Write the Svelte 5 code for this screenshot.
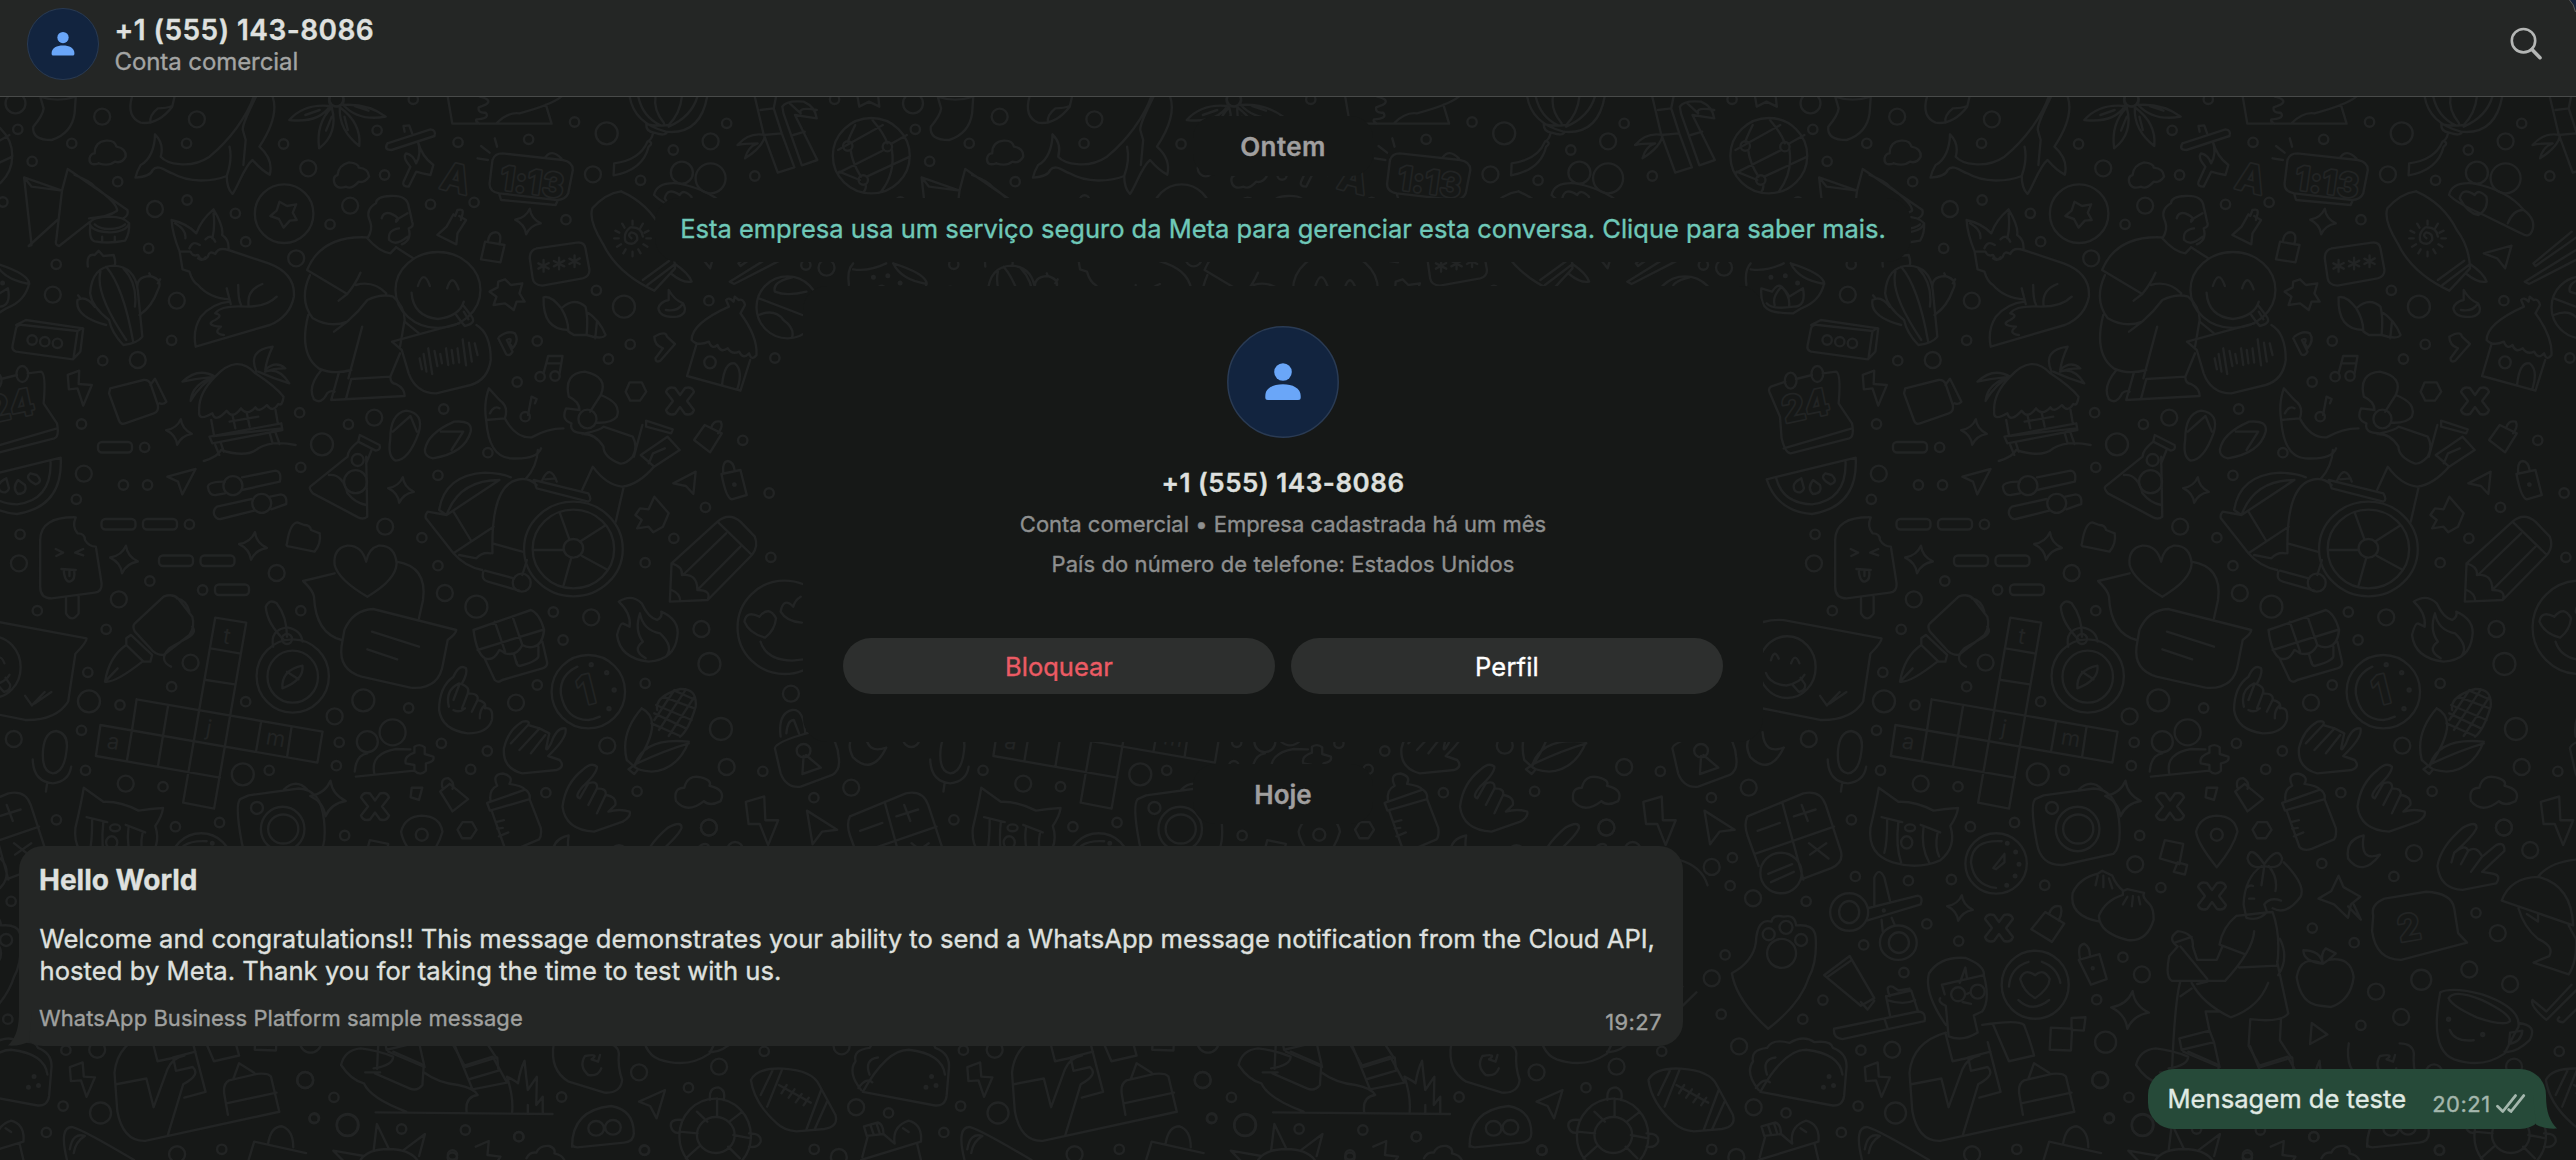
<script>
  const TILE = 897.5;

  // Each sheet holds line drawings in its own grid; m maps the grid onto the wallpaper.
  const sheets = [
    {
      m: [0.57398, 0.33333, 0, 0],
      paths: [
        // sock, mitten, whale
        'M70 290Q100 308 132 290L130 340Q125 400 90 420Q55 420 58 380Q75 345 76 325L70 290',
        'M230 290Q220 350 245 368Q275 375 300 320L304 290M262 368Q260 345 275 325Q290 325 300 318',
        'M442 290C430 350 400 420 365 470C330 510 290 490 280 470C285 440 280 420 270 403C270 440 262 480 245 495Q238 515 236 533Q262 530 266 510C275 490 290 515 300 520C330 550 370 545 395 528C395 550 398 570 405 582C415 560 425 500 440 480C450 500 460 515 470 524C475 490 465 460 452 440C475 380 483 330 475 290M446 290C435 330 422 370 423 390L428 420L424 495M400 440Q405 480 395 528',
        // flower
        'M575 318Q530 310 504 360Q555 370 575 318M578 322Q550 370 556 445Q590 400 578 322M592 322Q630 370 626 438Q590 390 592 322M598 315Q640 310 672 350Q625 365 598 315M532 345L557 330M578 350L568 392M600 350L606 390M618 318L642 332M574 290Q570 318 586 320Q602 318 598 290',
        'M780 290L788 371H961L951 314M836 290Q860 300 845 315L834 322Q832 340 846 338Q855 355 830 358Q828 365 835 371M865 370Q885 335 905 340Q960 315 978 290',
        // balloon
        'M1097 290Q1105 370 1160 395Q1220 405 1232 290M1112 290Q1120 350 1150 375M1142 290Q1138 330 1157 370M1188 290Q1185 340 1165 375Q1140 380 1126 372Q1125 395 1140 398Q1160 410 1162 395M1215 290Q1205 350 1165 380M1138 398Q1135 420 1128 425Q1115 480 1070 490L1069 526Q1120 510 1130 440Q1138 430 1132 425',
        // bamboo
        'M1315 290L1330 400L1355 518L1384 502L1362 400L1348 325L1325 330M1330 405L1362 400M1352 290L1348 325M1363 320Q1370 300 1400 305Q1420 320 1423 355L1385 345L1424 480L1397 496L1365 340L1363 320M1382 405L1402 395M1376 310L1395 340Q1390 320 1423 330M1285 435Q1305 395 1333 405Q1330 440 1298 475Q1303 440 1320 430Q1295 430 1285 435',
        'M1494 290L1497 320L1514 305L1532 320L1530 290',
        // globe
        'M1451 467a67 113 0 1 0 134 0a67 113 0 1 0 -134 0M1490 375Q1480 410 1477 425M1460 450L1538 375M1482 450Q1485 490 1500 530M1459 520L1540 450M1520 360Q1540 400 1546 430M1554 450Q1560 520 1535 575M1510 530L1585 470M1552 432L1580 405M1462 515L1498 540M1508 552Q1510 565 1505 575',
        // clouds
        'M172 490Q155 500 156 475Q158 460 165 460Q165 425 185 422Q200 420 203 440Q220 445 219 470Q212 492 200 485Q190 500 172 490',
        'M603 560Q585 570 582 545Q580 530 588 525Q590 495 608 487Q625 490 625 503Q642 505 643 530Q635 550 625 545Q612 570 603 560',
        // glyph blocks
        'M675 430L750 388Q760 390 757 408L682 450Q668 450 675 430M705 395L703 378L713 376L718 400M728 425Q735 470 755 495L750 525Q735 520 725 515L712 560Q700 560 703 545L715 500Q700 470 708 460Q720 465 725 490Q735 460 728 425',
        // alarm clock
        'M875 460L980 480Q998 485 998 510L990 580Q985 600 970 600L870 580Q852 575 853 550L858 480Q862 460 875 460M870 583L873 600L968 615L972 600M950 473Q960 445 978 475M862 415L866 440M838 438L853 458M832 475L850 480',
        // map, tin
        'M42 532L55 735L50 738M108 572L55 560L42 532L108 572L118 507L222 630Q225 645 215 655M50 738L100 660M130 525Q160 545 165 560Q205 610 204 632Q190 650 155 655M157 665L103 738Q95 735 98 720L108 572M157 680Q155 720 165 724Q190 732 218 722Q226 700 225 670M156 670Q160 695 191 697Q220 695 225 670Q215 650 191 650Q160 652 156 670M165 673Q175 688 191 687Q210 686 218 673M178 710V724M200 710V724',
        'M444 641a51 88 0 1 0 102 0a51 88 0 1 0 -102 0M487 605L500 618L516 613L510 638L517 660L505 662L494 683L486 657L471 648L482 632Z',
        // cactus
        'M153 800Q150 760 165 765L172 752L180 768L198 765Q202 785 200 795M157 880Q160 800 198 797Q235 800 240 870L248 1010Q240 1030 215 1035Q195 1000 190 960Q160 920 157 880M175 815Q165 880 220 1020M185 800Q215 860 232 1025M215 805Q240 850 235 920M240 870Q235 830 262 828Q285 840 275 870Q265 920 243 945M185 975Q130 950 135 900Q150 885 165 920M262 828L260 820M275 850L279 838M140 895L136 886',
        // fox
        'M313 755Q300 700 299 660Q325 670 342 700Q350 660 372 628Q390 680 387 705Q400 720 398 750L468 790Q515 820 512 890Q505 950 470 975L341 1040Q335 990 350 950Q370 910 400 905M398 750Q380 740 375 762Q365 750 362 770Q352 790 345 765Q335 770 332 755Q318 755 313 755L318 808L330 815Q335 845 345 855Q365 895 400 898M305 670Q325 690 323 715M372 640Q375 680 370 715M330 745Q335 720 348 735M358 718Q368 700 375 725M345 775Q352 785 358 772M395 865L402 912M415 855Q415 900 420 915M457 852Q430 870 433 915M375 940Q385 915 430 920Q465 920 482 890M375 940Q390 945 375 960Q355 975 385 980Q370 1000 390 1005',
        // person with a round friend
        'M640 715Q650 690 645 665Q635 630 655 610Q655 590 680 588Q710 585 712 620Q715 640 718 665Q722 680 712 685Q718 720 700 733M665 655Q668 635 680 640Q700 655 690 665M690 660L710 640M640 715Q660 755 680 760L690 742M695 685Q675 690 678 720Q690 740 710 710',
        'M640 712Q560 705 535 810L605 882Q620 850 628 818M605 882L590 902M540 825Q520 900 545 955Q575 985 605 965Q625 935 640 900Q665 880 685 890Q705 920 705 960L697 1040M582 995L605 965M620 855Q650 840 673 880M537 945Q520 1060 555 1105Q580 1125 612 1110M631 980L607 1135M690 742L720 775M612 1137L680 1130L697 1060M680 1130Q680 1150 690 1152Q705 1165 705 1188L577 1200L590 1120M612 1137L603 1195M560 1110Q535 1160 547 1198Q560 1215 570 1180Q575 1170 583 1175M705 965L730 1000',
        'M689 870a74 114 0 1 0 148 0a74 114 0 1 0 -148 0M717 878Q720 950 763 957Q800 950 808 905M728 858Q738 805 749 858M779 865Q788 815 799 868M795 945Q805 970 810 978Q830 970 822 950L808 918M808 935L816 958',
        'M683 1025L800 970M830 975Q855 1000 855 1080Q850 1140 820 1155L760 1180Q725 1180 712 1120L700 1050L683 1025M731 1075L735 1108M738 1062L743 1115M746 1045L753 1122M757 1053L762 1098M767 1062L770 1090M777 1045L781 1095M787 1050L790 1090M797 1045L800 1088M806 1018L812 1096M817 1028L822 1085M827 1030L832 1065',
        // pin, padlock
        'M790 643L778 680L762 705L795 733L797 700L812 660L800 648M793 648L797 630Q808 625 806 640L803 660',
        'M845 725L838 778L872 787L879 735ZM850 725Q852 695 865 697Q875 700 870 733',
        'M935 745L1005 728Q1018 725 1020 745L1027 810Q1027 830 1015 835L945 857Q930 855 928 835L923 775Q923 750 935 745M947 780V815M938 790L956 806M938 806L956 789M974 773V808M965 783L983 799M965 799L983 782M1001 766V801M992 776L1010 792M992 792L1010 775',
        // surfboard
        'M1082 574Q1055 580 1032 625Q1025 660 1050 730Q1075 820 1140 872L1176 805Q1175 740 1153 690Q1130 610 1082 574M1120 840L1166 782M1128 855L1174 795M1176 792Q1200 820 1205 845Q1190 850 1170 822M1100 715Q1092 705 1100 697Q1112 700 1110 720Q1102 740 1090 725Q1085 700 1098 682Q1118 680 1120 710M1102 662V674M1102 755V769M1084 671L1088 683M1120 671L1116 683M1072 692L1079 698M1130 692L1123 698M1070 715H1078M1126 715H1134M1075 740L1082 733M1128 740L1121 733M1086 760L1090 748M1116 760L1112 748',
        // shell
        'M947 892Q945 990 990 990Q990 960 978 925Q960 885 947 892M978 925Q1000 890 1020 920Q1025 950 1022 1005L1000 1005Q985 990 990 990M1022 935Q1045 960 1055 1005Q1050 1020 1022 1005M1040 965L1037 1015',
        'M880 838L890 855L910 850L905 880L914 905L900 905L895 930L880 910L860 915L865 890L853 875L867 862L868 845Z',
        'M1165 870Q1175 900 1190 910Q1200 940 1180 950Q1150 955 1147 925Q1150 905 1165 900ZM1160 930Q1180 935 1188 915',
        // cottage
        'M1205 1020Q1205 970 1270 920L1265 900Q1270 890 1278 905L1280 890L1287 900Q1295 895 1298 915L1290 940Q1320 1010 1318 1065Q1310 1085 1305 1060Q1295 1080 1288 1055Q1275 1065 1268 1045Q1255 1060 1250 1035Q1240 1050 1235 1025Q1215 1040 1205 1020M1213 1035L1197 1128L1290 1172L1307 1080M1258 1155Q1262 1085 1280 1090Q1295 1110 1285 1165M1227 1087a10 18 0 1 0 20 0a10 18 0 1 0 -20 0',
        // ball
        'M1318 922a54 93 0 1 0 108 0a54 93 0 1 0 -108 0M1322 895L1398 945M1380 832Q1345 845 1350 875Q1370 890 1405 875M1322 945Q1350 925 1365 960Q1385 985 1380 1012',
        'M870 1010Q885 990 897 1000Q905 1020 893 1045L890 1035M868 1015L882 1063Q888 1070 893 1055L883 1020Q893 1010 888 1030M1140 1010Q1160 990 1162 1010L1176 1032L1150 1083Q1142 1088 1142 1075L1155 1045Q1140 1035 1140 1010',
        'M947 1120L955 1068H980L975 1120M953 1090H978M920 1245L926 1190L935 1197L932 1210',
        'M1097 1147H1118L1126 1175L1115 1202H1098L1090 1175Z',
        'M28 975L45 960L145 985L140 1055L127 1078L28 1055Q20 1050 22 1035L28 985Q30 972 40 975L135 993L143 985M135 993L128 1075',
        'M118 1125L138 1112L137 1152L160 1155L145 1217L135 1165L120 1168Z',
        'M192 1165L250 1140Q258 1138 262 1150L275 1215Q277 1235 268 1240L218 1270Q210 1275 207 1260L190 1180ZM262 1155L270 1136L290 1205Q285 1215 278 1210',
        // palm hut
        'M347 1235Q345 1180 375 1130Q412 1060 445 1120Q480 1160 494 1190Q492 1220 485 1212Q475 1240 465 1215Q450 1240 445 1222Q430 1250 420 1225Q405 1260 395 1232Q375 1270 370 1240Q345 1265 347 1235M375 1130Q345 1100 318 1145Q345 1135 375 1130Q335 1150 332 1203Q350 1150 375 1130M447 1115Q430 1050 475 1040Q465 1075 462 1110Q480 1080 497 1105Q475 1105 462 1115Q485 1100 504 1150Q475 1135 450 1115'
      ],
      dots: [[27,310,10],[31,388],[178,350,8],[125,430],[56,484],[205,545],[343,358,8],[325,430],[326,600],[270,627,8],[410,640],[494,432],[537,505,8],[657,391],[670,525],[720,298],[798,427],[921,418],[1001,366],[1057,400,11],[1033,523,8],[1116,541],[1173,450],[1188,518,11],[1238,535,15],[1238,424,8],[1266,370],[1315,528],[1454,298],[5,606],[259,745],[98,793],[92,884,8],[308,902,8],[428,725],[516,775,8],[575,673],[610,617,8],[750,613],[826,607],[986,659],[1039,871],[1087,920,11],[1235,902],[936,1023],[1098,1033],[1060,1077],[1350,1074],[901,1146],[773,1227],[299,1021],[179,1082],[240,1080,8],[522,1238],[1404,795],[1440,803,8],[586,298,7],[1477,438],[1546,440],[1504,540],[56,1020],[78,1025],[100,1030],[941,1130],[967,1128],[915,1250]]
    },
    {
      m: [0.57398, 0.33333, 0, 400],
      paths: [
        'M368 60L373 108L490 85M405 45L410 85M430 40L435 80M480 30L484 70M400 65L450 50M365 110L490 70L492 90L370 130ZM375 135L382 165M385 130L390 155M470 100L475 130M480 98L487 132M355 183Q380 170 385 150Q430 175 450 145Q475 120 515 135',
        // ice lolly
        'M70 420Q70 350 132 352Q125 380 135 400Q148 400 148 420Q155 440 167 440L177 550Q178 575 165 578L90 595Q70 595 70 560ZM115 595V640Q125 670 137 640V588M97 447L110 458L98 468M145 447L131 458L145 466M107 507L132 510M111 508Q112 545 122 545Q132 540 129 510M121 512V528',
        'M500 430Q505 370 518 367L530 375Q540 375 542 390L557 400Q560 430 548 455L505 440Q497 440 500 430',
        // heart and speech bubbles
        'M638 485Q630 435 605 437Q580 445 583 495Q590 540 640 590Q690 540 691 490Q688 435 660 437Q642 445 638 485M583 520L528 543Q545 570 547 590Q550 700 595 720M691 485Q745 500 737 600L730 655M600 690Q615 630 650 627L795 690Q795 700 780 720L772 790Q765 870 715 863L630 830Q590 810 595 740ZM648 695L730 740M640 748L692 778',
        // wheelchair
        'M913 447a86 142 0 1 0 172 0a86 142 0 1 0 -172 0M928 447a71 118 0 1 0 142 0a71 118 0 1 0 -142 0M982 445a17 28 0 1 0 34 0a17 28 0 1 0 -34 0M975 337L992 418M1053 378L1010 425M1059 510L1014 468M982 555L995 475M928 450H981',
        'M765 330Q775 225 845 218Q875 220 890 232M778 345Q800 240 870 240M778 345L870 240M765 330L778 345L745 335Q740 345 742 355L790 460L860 380M790 335L820 420M858 460Q855 260 900 240Q920 230 935 255M790 460Q810 500 840 510M858 430L910 455M800 465L830 475Q840 455 855 460M845 512L895 535M842 515Q838 540 850 545L905 572M918 480L910 525M930 240L1025 280Q1032 300 1025 305L935 265ZM945 240Q958 190 970 245M950 238L968 235',
        // pencil
        'M1170 490L1250 365Q1270 335 1290 365L1315 410Q1322 440 1310 465L1233 600L1167 605ZM1250 365L1310 465M1190 525L1265 400M1215 570L1290 440M1170 490Q1190 500 1188 525Q1215 520 1215 570Q1240 570 1233 600M1170 570Q1185 580 1185 603',
        'M1140 290L1165 340L1155 380L1138 397L1130 380L1110 385L1118 360L1107 345L1115 325L1130 328Z',
        'M1257 222L1290 210L1301 285L1275 298Q1265 295 1257 222M1260 218Q1258 185 1268 183Q1278 185 1280 212',
        'M1173 250L1212 215L1208 282L1195 258Z',
        // flame
        'M1078 605Q1100 580 1118 610Q1130 655 1145 660Q1155 650 1152 635Q1185 660 1180 710Q1175 780 1130 785Q1080 775 1075 705Q1080 670 1085 670L1097 680Q1100 640 1078 605M1125 775Q1100 750 1120 725Q1105 690 1115 640Q1120 690 1150 700Q1175 740 1160 770',
        // chest
        'M825 690L925 630Q940 640 948 690Q945 735 930 740Q920 745 910 735Q900 770 880 760Q872 750 870 750Q860 785 845 775Q830 760 825 690M832 750L945 690M862 665L880 755M893 650L910 735M845 778L862 840Q868 850 875 840L945 805Q955 800 953 785L945 725M900 790L895 760M938 740V770Q935 785 905 798Q900 795 900 785',
        'M961 875a64 110 0 1 0 128 0a64 110 0 1 0 -128 0M1006 800Q975 825 977 880Q985 960 1025 960Q1035 958 1045 950',
        // corn
        'M1145 930Q1140 890 1185 867Q1215 865 1212 920Q1200 990 1185 1010M1118 925Q1080 1000 1092 1080L1105 1100Q1160 960 1118 925M1105 1100Q1120 1010 1200 1025Q1180 1110 1135 1115Q1110 1110 1105 1100M1110 1090Q1160 1050 1200 1030M1095 1108L1103 1098L1112 1108L1105 1122ZM1140 940L1195 985M1143 915L1205 960M1155 890L1210 925M1175 872L1212 900M1175 870L1140 960M1195 868L1148 990M1210 890L1165 1008M1135 970L1185 1008',
        // hands
        'M765 930Q765 860 790 830Q800 790 812 805Q815 820 805 850M782 920Q775 870 800 850Q820 860 815 880Q835 880 832 900Q848 905 845 925Q860 920 857 960Q850 1000 815 1000Q770 990 765 930M790 930Q800 940 810 925M800 855L790 900M815 880L805 925M832 900L822 935M836 955Q835 930 845 915',
        'M878 1045Q885 990 910 965Q925 960 920 975L940 985L957 1000L952 1040Q950 1060 960 1030Q970 980 985 985Q990 1010 955 1068L975 1080Q985 1100 970 1110L910 1120Q875 1105 878 1045M890 1030L920 975M905 1050L940 985M925 1060L950 1005',
        'M980 1220Q985 1150 1015 1110Q1030 1085 1040 1100Q1040 1120 1015 1160Q1000 1190 1010 1195L1025 1150Q1042 1140 1040 1165Q1058 1165 1055 1185Q1075 1190 1072 1215L1060 1235Q1080 1225 1097 1235Q1100 1250 1085 1265L1035 1295Q985 1290 980 1220M1040 1165L1025 1215M1055 1185L1040 1240',
        // fountain pen
        'M235 670L285 590Q300 580 310 595L335 650Q340 680 330 705L285 765Q270 765 262 745L235 695Q230 680 235 670M220 715L228 705L265 765L262 785L250 785L220 735ZM220 735Q190 770 183 845Q200 850 248 785M183 845L205 805M308 595Q325 600 330 635M335 680Q345 700 320 720L295 745Q275 780 298 800',
        // crossword
        'M375 653L429 668L373 1226L319 1208ZM367 745L417 760M359 840L409 853M238 898L562 995L553 1088M238 898L230 990M175 975L167 1068L383 1133M175 975L553 1088M293 915L275 1100M230 990L221 1083M455 965L446 1055M508 980L500 1072',
        // compass
        'M447 828a63 110 0 1 0 126 0a63 110 0 1 0 -126 0M466 830a44 78 0 1 0 88 0a44 78 0 1 0 -88 0M492 865Q490 810 527 797Q530 840 492 865M500 815L520 838M476 740Q470 690 500 682Q525 690 527 725M495 720Q465 670 463 620Q470 595 482 610Q500 650 500 710',
        // heart-eyed face
        'M1285 682a82 140 0 1 0 164 0a82 140 0 1 0 -164 0M1323 650Q1300 630 1297 665Q1305 700 1333 713Q1350 690 1352 655Q1340 615 1323 650M1395 590Q1385 600 1382 620Q1365 590 1360 635Q1370 665 1397 668M1325 725Q1335 780 1380 782L1400 778',
        // padlock
        'M1360 1010Q1355 940 1380 930Q1400 925 1403 1000M1370 1000Q1372 960 1383 960L1392 1000M1350 1045Q1352 1020 1440 985Q1460 1030 1461 1070Q1465 1110 1450 1125L1395 1160Q1370 1165 1360 1120ZM1404 1065L1430 1103L1398 1122L1400 1068M1388 1052a12 20 0 1 0 24 0a12 20 0 1 0 -24 0',
        'M75 1050Q78 995 98 993Q120 1000 116 1050Q112 1118 92 1120Q72 1115 75 1050M57 1078Q58 1145 92 1150Q120 1145 124 1100M82 1150L80 1175',
        'M618 1115Q620 1065 640 1060M652 1120Q645 1060 690 1047L715 1048M620 1130L722 1112M722 1058V1040Q732 1030 740 1042V1062L755 1070Q758 1085 742 1090V1112Q732 1130 722 1112V1095L707 1090Q703 1070 722 1058'
      ],
      dots: [[142,72],[252,142],[146,221,8],[215,255],[257,255],[133,298],[35,403],[33,490,8],[65,632],[185,688],[207,598,8],[261,543],[330,373],[353,570],[482,519,8],[607,73],[652,53,8],[561,133,11],[671,380,8],[735,413],[763,497],[524,632],[524,202],[775,579,8],[830,620,11],[763,226],[850,158],[1294,121],[1340,279],[1229,322],[1174,415],[1124,488],[1343,472],[964,636],[981,720],[1030,652,8],[1222,687,8],[1236,792,11],[1124,850],[936,855],[899,908,8],[712,924],[633,901,11],[583,949,8],[428,905],[332,788,8],[299,860],[209,915],[153,817],[155,904,11],[24,1017,8],[142,991],[149,1111],[219,1151,8],[284,1160],[423,1123,11],[469,1111],[586,1097],[591,1027],[640,1025,10.5],[684,997,13],[769,1030],[820,1108],[849,1053],[951,1178],[1058,1037,8],[1110,1174],[1256,987,11],[1266,1101,8],[1329,1114],[1378,881,8],[1418,1193],[1483,1163,8],[1235,1283,8],[909,548,9],[500,717,5],[1030,794,1.5],[1057,818,1.5],[1070,870,1.5],[1061,926,1.5],[1279,253,1]]
    },
    {
      m: [0.53316, 0.33333, -55, 80],
      paths: [
        // sandal, chopsticks
        'M1330 345Q1335 305 1375 310Q1440 330 1470 390Q1495 420 1485 455Q1480 475 1465 460L1395 405Q1345 370 1330 345M1440 430Q1450 390 1468 390M1378 345Q1355 320 1350 355Q1365 400 1385 405Q1405 385 1400 350Q1385 325 1378 345',
        'M1395 520L1447 497L1435 565L1420 535Z',
        'M1488 550L1560 455M1492 558L1575 465M1472 605L1568 510M1480 612L1580 530M1472 605L1480 612M1488 550L1492 558',
        // dancer with phone
        'M1020 925Q1010 970 1015 1020L1050 1015Q1058 980 1040 960ZM1015 1020Q1020 1130 1060 1135Q1110 1140 1118 1105M1050 1015Q1070 1075 1100 1072Q1130 1045 1160 1045M1022 1000Q1030 975 1040 985M1170 950Q1160 880 1200 875Q1245 890 1230 945L1210 995M1170 950Q1190 965 1190 990L1165 985Q1155 1020 1175 1030Q1170 1060 1200 1060Q1230 1050 1235 1040M1230 945Q1270 970 1260 1010Q1250 1030 1222 1028M1188 1017a17 28 0 1 0 34 0a17 28 0 1 0 -34 0M1235 1040L1290 1070Q1300 1100 1290 1130Q1275 1155 1265 1150Q1235 1130 1235 1100Q1220 1060 1195 1062M1315 1022L1365 1048L1362 1060L1315 1040ZM1308 1035L1292 1130M1305 1125L1355 1070L1378 1110L1330 1160ZM1320 1150L1328 1120L1350 1105M1330 1160Q1300 1215 1270 1220Q1240 1215 1215 1160L1195 1230M1112 1110Q1110 1160 1090 1195M1273 1220L1258 1325',
        'M1405 1080L1425 1035L1457 1060L1435 1117ZM1437 1045Q1440 1020 1455 1025Q1460 1040 1450 1060',
        // flask, shoes, switches
        'M685 1220L755 1130M790 1130L792 1310Q785 1320 775 1312L690 1240Q682 1225 685 1220M755 1130Q755 1110 775 1085M800 1110L790 1150M778 1065L815 1095Q818 1110 808 1112L775 1085ZM720 1185Q745 1180 755 1240Q770 1270 790 1275',
        'M835 1080Q835 1000 865 992Q900 1000 888 1060Q870 1140 845 1142Q830 1130 835 1080M840 1055L873 1008L885 1055M900 1110Q905 1060 955 1025Q990 1020 986 1055Q975 1120 915 1135Q900 1130 900 1110M930 1055H972L950 1110',
        'M525 1205Q495 1205 493 1220Q495 1248 508 1245L525 1240M557 1192L620 1172Q632 1175 628 1205L557 1230M575 1257L510 1280Q502 1290 505 1305Q510 1320 517 1317L580 1292M610 1250L630 1243Q642 1245 640 1272L612 1288',
        'M417 1190L470 1167L445 1243L437 1205Z',
        // calendar, melon
        'M58 920L85 905M105 897L135 885M155 880L180 875Q190 880 185 970L210 1030Q215 1070 205 1075L95 1120Q85 1120 78 1075L75 1010L55 935Q53 925 58 920M82 1105L210 1045M84 902a11 24 0 1 0 22 0a11 24 0 1 0 -22 0M134 882a11 24 0 1 0 22 0a11 24 0 1 0 -22 0',
        'M50 1198L217 1133Q222 1280 135 1302Q70 1295 50 1198M68 1195Q80 1270 135 1273Q200 1260 198 1145M115 1195Q95 1210 103 1232Q115 1245 120 1225ZM137 1200Q125 1225 137 1242Q155 1240 150 1215ZM160 1180Q148 1195 170 1213Q185 1205 172 1185Z',
        // teapot
        'M12 615Q8 570 20 550M20 568Q50 575 82 550M95 550Q155 580 158 610Q150 665 115 685L100 700Q60 700 50 685Q38 670 40 625L60 635Q70 610 78 620Q90 640 92 650L118 625Q125 680 100 680Q60 690 50 670M158 612Q110 600 95 550M65 675Q60 650 78 620Q95 650 92 680'
      ],
      dots: [[774,1140,6],[770,1205,11.5],[540,1217,9.5],[594,1270,9.5],[58,592,1.3],[85,587,1.3],[108,609,1.3],[1481,1214,1]]
    },
    {
      m: [0.55867, 0.38265, -95, 560],
      paths: [
        'M113 162Q130 155 150 157L325 205Q325 215 305 245L292 370Q270 420 215 418L113 388M105 280a50 79 0 1 0 102 0a50 79 0 1 0 -102 0M118 295Q125 325 155 328Q180 320 187 300M127 262Q133 230 141 258M163 270Q170 240 178 270M165 325L177 345Q190 340 188 325L180 308M215 355L227 380L250 345M232 375L262 345',
        // moon, calculator
        'M100 450Q75 470 90 515Q125 565 150 490Q115 510 112 450',
        'M85 670L185 610Q215 600 225 640L252 760Q258 790 235 805L180 835M85 670Q78 690 85 720L105 800M147 632L185 835M98 768L240 697M103 708L143 687M168 670L207 652M182 640L193 682M195 740L230 780M197 770L226 740M108 818a37 53 0 1 0 74 0a37 53 0 1 0 -74 0M122 820L165 795M127 842L168 815',
        // crying cat
        'M305 700Q315 640 320 595L355 632Q385 630 418 655Q440 650 462 648Q460 670 448 695Q460 750 430 785Q390 810 345 790Q300 770 305 700M325 672L362 685M395 692L430 712M335 680Q335 740 330 765M355 685Q350 750 360 790M400 700Q395 750 410 790M425 715Q420 750 428 775M367 700a9 9 0 1 0 18 0a9 9 0 1 0 -18 0M360 738a10 16 0 1 0 20 0a10 16 0 1 0 -20 0',
        'M475 793a55 79 0 1 0 110 0a55 79 0 1 0 -110 0M540 735Q487 730 485 790Q490 850 530 857M525 805L545 768V790L530 808Z',
        // camera
        'M615 615L705 597Q745 600 750 680Q755 750 740 768L650 797Q610 800 603 740Q590 640 600 625ZM637 703a39 58 0 1 0 78 0a39 58 0 1 0 -78 0M650 703a27 38 0 1 0 54 0a27 38 0 1 0 -54 0M678 600Q700 570 720 600',
        'M925 803Q890 740 888 710Q895 670 925 668Q958 670 962 710Q955 750 925 803',
        'M907 595H926L920 627L905 620ZM832 732L865 742L858 795L823 780ZM855 790L872 797L868 822L848 815Z',
        'M1042 635L1110 600Q1120 610 1118 625L1047 655ZM1050 655L1073 750Q1080 762 1095 755L1135 730Q1140 720 1138 700L1118 625M1048 630Q1045 600 1060 590Q1050 560 1070 558Q1090 565 1082 585Q1105 590 1110 600M1058 685L1072 680M1060 702L1070 700M1063 722L1080 712',
        'M958 605L975 585L1008 625L980 657ZM962 595Q958 570 972 570Q985 580 980 598',
        'M998 685H1015L1023 705L1013 727H997L989 705Z',
        // onions
        'M715 945Q660 930 667 870Q680 830 712 820L720 812L738 825Q745 850 758 865M757 865L765 860L795 870Q790 880 805 900Q812 910 812 940Q800 1000 765 993Q715 975 714 930Q725 890 757 875ZM712 825L708 850M722 825L722 855M732 832L738 858M765 880L757 900M775 878L773 905M785 880L788 900',
        // scissors
        'M233 920a34 49 0 1 0 68 0a34 49 0 1 0 -68 0M249 920a18 29 0 1 0 36 0a18 29 0 1 0 -36 0M322 1000a33 45 0 1 0 66 0a33 45 0 1 0 -66 0M338 1000a18 27 0 1 0 36 0a18 27 0 1 0 -36 0M300 910L390 877Q400 880 395 900L300 942M312 905V830Q320 800 330 830L340 890M325 940L327 970M343 935L348 952',
        'M593 965L618 920L652 950L630 998ZM625 925Q630 900 645 905Q650 920 642 942',
        // paw
        'M100 1000Q102 935 128 945Q130 925 150 932Q170 925 172 955Q205 950 207 985Q210 1050 195 1090Q180 1160 122 1225Q65 1150 57 1080Q95 1050 100 1000',
        // mushroom
        'M1435 890Q1450 830 1500 828Q1560 850 1563 955ZM1465 910Q1475 960 1500 990Q1530 1010 1520 1035L1492 1052L1555 1083Q1570 1050 1568 990Q1560 970 1555 955M1480 925L1500 945L1500 925M1500 828Q1520 790 1568 783Q1610 800 1620 850',
        'M222 1085L268 1035L312 1145L288 1165ZM228 1090L272 1045M288 1155L300 1175L312 1152',
        'M240 1225L390 1180Q405 1180 402 1205L255 1252Q238 1250 240 1225M330 1198L336 1225M340 1190L333 1140L378 1125L390 1178M335 1150Q365 1165 385 1150M340 1140Q330 1110 345 1115L355 1125L375 1120',
        // reader with glasses
        'M440 1215Q400 1130 410 1080Q430 1035 475 1040Q510 1060 508 1085L433 1110L438 1135M465 1105L475 1065L478 1095M508 1085Q520 1150 505 1180L490 1190L497 1235Q470 1260 445 1245L440 1165Q425 1155 430 1145M470 1155L485 1160M475 1135L485 1130',
        'M440 1235Q380 1260 375 1340L380 1440Q390 1520 430 1518L670 1442L655 1350Q650 1340 630 1343L580 1360Q568 1370 572 1400L578 1450M440 1240L452 1310L500 1295M525 1215L553 1310L598 1295M505 1215Q570 1200 580 1215Q590 1250 598 1295M378 1370L432 1355L445 1430L470 1330Q480 1300 500 1295M515 1260L538 1390L500 1405M480 1300L520 1285M470 1505L498 1370Q530 1345 515 1325L485 1335L480 1300M575 1420L665 1392M588 1355L598 1315L625 1340',
        'M540 1110a60 89 0 1 0 120 0a60 89 0 1 0 -120 0M600 1085Q580 1065 573 1095Q580 1130 600 1145Q625 1120 626 1095Q615 1065 600 1085M588 1050Q555 1065 553 1115M612 1050Q640 1065 645 1105M570 1150Q595 1185 625 1150',
        'M678 1045L715 1030L728 1095L700 1110ZM680 1040Q675 1005 688 1003Q698 1010 698 1035',
        // walker with ice cream
        'M1010 795Q985 740 980 780Q985 810 1010 800Q1040 810 1042 780Q1035 745 1010 795M1010 800L1005 850M1018 800Q1035 830 1030 865M1005 800Q975 830 973 900L978 935Q1000 945 1015 920L1010 900Q1020 880 1040 890M980 855Q985 848 990 852M983 885H992M1045 790Q1085 850 1075 880Q1050 930 1025 910M960 930Q1020 920 1025 920Q1040 980 1033 1060L965 1065M960 930Q935 960 930 1005L975 1030M992 970Q990 1020 940 1100L845 1100Q832 1090 840 1035L855 1010Q835 990 855 970Q885 975 882 1010L890 1045H925L935 1010M850 1000L880 985M860 1010L908 1095M860 1100Q850 1150 845 1330M880 1105Q900 1160 950 1195Q1000 1170 1017 1105M890 1108L908 1102M1038 990Q1055 1040 1035 1085M1033 1050L1053 1185Q1040 1210 985 1200L982 1270L1003 1325L1060 1300L1062 1330M1040 1200L1038 1255L1058 1300M928 1180L905 1180L912 1230L858 1250L862 1280L920 1260L912 1230M920 1260L930 1325L865 1285M860 1140L880 1120',
        'M1143 825L1152 855L1182 880L1165 900L1160 935L1135 900L1107 885L1130 865ZM1160 905L1183 940L1170 900',
        'M1205 930Q1200 900 1225 885L1300 867Q1345 870 1350 910L1357 975L1373 1000L1255 1045Q1210 1045 1203 970Z',
        // apple, cup
        'M1115 1055Q1075 1030 1068 1090Q1075 1160 1110 1165L1130 1168Q1165 1150 1170 1090Q1165 1035 1125 1045L1115 1055Q1080 1050 1080 1020Q1110 1020 1115 1055Q1110 1030 1120 1015L1138 1028L1125 1045',
        'M1325 1130Q1345 1115 1400 1135Q1470 1170 1465 1220Q1450 1260 1440 1290Q1400 1330 1350 1305Q1305 1280 1325 1130M1340 1145Q1350 1120 1400 1150Q1450 1185 1450 1205Q1440 1220 1390 1195Q1345 1165 1340 1145M1465 1210Q1500 1215 1485 1255Q1460 1290 1440 1285M1450 1235L1472 1230Q1470 1260 1448 1265ZM1342 1228Q1350 1260 1385 1255',
        'M1490 1150Q1485 1165 1515 1202L1575 1115M1490 1150L1515 1180L1560 1110M1538 1195Q1530 1205 1545 1208L1600 1130',
        'M1320 800Q1325 750 1365 700Q1390 680 1390 700Q1385 720 1350 765M1320 800Q1325 860 1365 862L1425 845Q1435 825 1420 820L1400 815L1440 760Q1440 735 1425 745L1400 775Q1390 745 1375 760Q1370 740 1350 765L1345 790M1375 760L1362 795M1400 775L1380 815',
        'M1188 720Q1155 730 1160 780Q1185 830 1217 770Q1180 790 1188 720M1380 630Q1375 595 1395 595Q1400 560 1425 568Q1445 575 1440 590Q1470 600 1460 630Q1440 645 1430 630Q1400 665 1380 630',
        'M1505 632L1538 618L1540 680H1563L1545 745L1530 690H1510ZM8 655L62 705L35 710L18 743Z',
        // taco
        'M105 1385Q80 1340 95 1310Q90 1280 120 1275Q130 1250 160 1262Q185 1240 205 1260Q235 1255 238 1275Q265 1290 262 1330L258 1400Q255 1430 235 1425L108 1390Q150 1280 190 1280Q250 1290 255 1345M100 1380Q115 1350 125 1365M135 1300Q110 1305 120 1345',
        'M295 1325L318 1313L320 1350L340 1352L325 1403L315 1360L297 1362ZM665 1197L690 1195L687 1230L665 1228ZM628 1222L666 1225L664 1282L626 1280ZM1095 1210L1123 1240L1092 1265Z',
        'M110 1480L135 1470Q145 1475 145 1500L115 1505ZM117 1505L107 1560M122 1478L127 1500M133 1475L138 1497M145 1500L165 1525M165 1525Q160 1480 190 1465Q215 1475 212 1520L105 1568M180 1485L190 1495M205 1525L212 1568M290 1568Q275 1480 300 1482Q320 1490 410 1568M295 1540Q300 1495 322 1505Q305 1520 302 1550',
        'M615 1568L625 1520L718 1550M650 1525Q655 1480 675 1480Q695 1490 695 1535'
      ],
      dots: [[271,679],[21,802,8],[58,778],[54,851],[95,884,8],[190,892],[278,827],[484,697],[563,686],[373,838],[450,835],[617,850],[787,720],[779,795,8],[825,856],[1113,793],[1278,766,8],[1242,827],[1439,699,8],[1486,758,8],[1096,962],[1171,1000],[1389,922],[1428,975,8],[293,1006],[406,951],[463,996],[45,1032],[21,1093,8],[38,1187],[220,1150],[365,1078],[184,1200],[757,1038],[791,1083,8],[710,1149],[1210,1128,8],[1291,1097,10],[1377,1070,8],[1450,1108,8],[1255,1194,8],[1183,1216],[1538,1284],[70,1271,8],[288,1281],[344,1280,8],[726,1260,10.5],[716,1359,8],[350,1445,10.5],[283,1427],[154,1445],[96,1430,8],[253,1496],[732,1460],[792,1477,10.5],[21,1540],[487,1553,8],[567,1540],[980,1555],[1099,1507],[65,1560,8],[1324,1543],[630,648,6],[925,718,6],[123,978,6],[154,960,6.5],[181,993,6],[146,1028,14.5],[462,1135,7],[497,1128,7],[703,1067,1],[329,916,1],[1340,1200,1.5],[1401,1240,1.5],[231,1350,1.3],[221,1378,1.3],[239,1373,1.3],[550,740,1.3],[565,763,1.3],[571,795,1.3],[564,826,1.3],[549,850,1.3]]
    },
    {
      m: [0.6505, 0.33333, -117.5, 1030],
      paths: [
        'M1335 150Q1345 112 1385 116Q1430 122 1440 165L1465 255Q1470 290 1448 297L1405 304Q1385 300 1375 280Q1340 220 1335 150M1368 122L1350 195M1383 118L1360 230M1443 180L1420 300M1452 215L1433 298M1378 165L1427 218M1390 165L1382 190M1402 178L1393 203M1413 192L1404 217M1424 203L1416 226',
        'M1060 350Q1060 240 1120 228Q1155 240 1155 310Q1155 335 1140 338L1068 352Q1060 352 1060 340M1085 295a12 22 0 1 0 24 0a12 22 0 1 0 -24 0M1111 292a12 22 0 1 0 24 0a12 22 0 1 0 -24 0',
        'M1163 215L1203 180L1190 265L1180 228Z',
        // life ring
        'M1225 318a55 112 0 1 0 110 0a55 112 0 1 0 -110 0M1252 315a29 54 0 1 0 58 0a29 54 0 1 0 -58 0M1252 245L1268 275M1283 205V258M1322 245L1302 275M1225 305L1253 310M1308 315L1335 325M1300 350L1318 385M1255 350L1235 385M1272 210Q1270 172 1285 172Q1297 180 1293 210M1230 270Q1210 265 1212 290Q1215 312 1226 308M1332 310Q1352 310 1350 335Q1345 355 1332 350',
        // hill and grass
        'M758 247L1030 252M705 105Q710 60 735 55Q760 60 785 80Q785 105 755 115M705 105Q720 150 740 160Q750 205 805 245M785 65L832 105L830 165Q822 185 810 175L757 130M742 127H765M832 127Q855 160 885 165Q910 175 915 195Q895 200 898 247M880 48L907 178L960 158L938 80L893 108M903 147L947 122M968 245Q970 200 960 140Q975 155 977 160Q980 120 987 92Q990 150 992 180L1006 140L1005 225L1015 200V247M992 225V245',
        'M1032 40Q1025 120 1055 155L1110 188Q1135 190 1137 150Q1130 110 1132 70Q1130 40 1110 40M1103 75L1100 95L1090 88Q1103 70 1080 78Q1070 110 1085 135Q1100 140 1105 115',
        // sun, bag, bottle
        'M735 390Q745 358 778 357Q810 358 822 390M740 378L693 362L712 400M755 362L760 282L778 355M800 362L834 312L825 378',
        'M912 350L932 333L930 375L950 380L940 410M990 385Q995 365 1005 368Q1010 345 1025 348Q1035 355 1033 370Q1045 375 1048 390',
      ],
      dots: [[1044,201],[1239,173],[978,320],[896,300],[798,297],[694,202],[664,264],[1171,360],[876,382],[1163,127,8],[1286,110,8],[715,285,11],[650,150,8]]
    }
  ];

  const sparkles = [[528,221.5,13,13],[179,432,13,13],[401,490,13,13],[253,546,14,14],[124,559.5,14,14],[328,798.5,18,18],[165,908,13,13],[335,1010,19,19]];
  const crosses = [[680,401,14],[375,806.5,14],[204,928,14],[417,896,14]];
  const pills = [[98,442],[101.5,519],[143,519],[159,555.5],[200.5,555.5],[215,584.5]];
  const labels = [
    ['1:13', 499, 189, 33, 8], ['A', 439, 188, 38, 14], ['24', -10, 423, 36, -12],
    ['1', 581, 706, 40, -14], ['t', 222, 643, 22, 10], ['a', 106, 748, 22, 10],
    ['j', 205, 735, 22, 10], ['m', 265, 744, 22, 10], ['2', 605, 942, 36, -10]
  ];
  const copies = [-1, 0, 1, 2, 3];
  const matrix = ([a, d, e, f]) => `matrix(${a} 0 0 ${d} ${e} ${f})`;
</script>

{#snippet avatar(big)}
  <svg class={['avatar', big && 'big']} viewBox="0 0 112 112" aria-hidden="true">
    <circle class="disc" cx="56" cy="56" r="55.2" />
    <circle class="person" cx="56" cy="46" r="8.8" />
    <path class="person" d="M38.3 70C38.3 62 46.5 58.2 56 58.2S73.7 62 73.7 70V71.5Q73.7 74 71.2 74H40.8Q38.3 74 38.3 71.5Z" />
  </svg>
{/snippet}

<div class="app">
  <svg class="wallpaper" viewBox="0 0 2576 1160" aria-hidden="true">
    <defs>
      <g id="tile">
        {#each sheets as s}
          <g transform={matrix(s.m)}>
            {#each s.paths as d}<path {d} />{/each}
          </g>
          {#each s.dots as [x, y, r = 4.7]}
            <circle cx={x * s.m[0] + s.m[2]} cy={y * s.m[1] + s.m[3]} r={r} />
          {/each}
        {/each}
        {#each sparkles as [x, y, w, h]}
          <path transform={`translate(${x} ${y}) rotate(8)`} d={`M0 ${-h}Q${w * 0.2} ${-h * 0.25} ${w} 0Q${w * 0.2} ${h * 0.25} 0 ${h}Q${-w * 0.2} ${h * 0.25} ${-w} 0Q${-w * 0.2} ${-h * 0.25} 0 ${-h}`} />
        {/each}
        {#each crosses as [x, y, s]}
          <path transform={`translate(${x} ${y}) scale(${s / 14})`} d="M0 -6L5 -13Q12 -15 14 -9L7 0L14 9Q12 15 5 13L0 6L-5 13Q-12 15 -14 9L-7 0L-14 -9Q-12 -15 -5 -13Z" />
        {/each}
        {#each pills as [x, y]}
          <rect {x} {y} width="34" height="10.5" rx="4" />
        {/each}
        {#each labels as [t, x, y, size, turn]}
          <text class:outlined={size > 30} font-size={size} transform={`translate(${x} ${y}) rotate(${turn})`}>{t}</text>
        {/each}
      </g>
    </defs>
    {#each copies as k}
      <use href="#tile" x={k * TILE} />
    {/each}
  </svg>

  <header>
    {@render avatar(false)}
    <div class="who">
      <h1>+1 (555) 143-8086</h1>
      <p>Conta comercial</p>
    </div>
    <svg class="search" viewBox="0 0 36 36" aria-hidden="true">
      <circle cx="14.5" cy="14.7" r="11.7" />
      <path d="M23 23.5L31 31.7" />
    </svg>
    <svg class="corner" viewBox="0 0 8 14" aria-hidden="true">
      <path class="outside" d="M2 0Q6.5 4 8 11V0Z" />
      <path class="edge" d="M1.5 0Q6 4 7.5 12" />
    </svg>
  </header>

  <main>
    <div class="day">Ontem</div>
    <div class="notice">Esta empresa usa um serviço seguro da Meta para gerenciar esta conversa. Clique para saber mais.</div>

    <section class="card">
      {@render avatar(true)}
      <h2>+1 (555) 143-8086</h2>
      <p>Conta comercial • Empresa cadastrada há um mês</p>
      <p class="country">País do número de telefone: Estados Unidos</p>
      <div class="actions">
        <button class="block">Bloquear</button>
        <button class="profile">Perfil</button>
      </div>
    </section>

    <div class="day today">Hoje</div>

    <article class="incoming">
      <h3>Hello World</h3>
      <p>Welcome and congratulations!! This message demonstrates your ability to send a WhatsApp message notification from the Cloud API,<br /><span class="second">hosted by Meta. Thank you for taking the time to test with us.</span></p>
      <footer>
        <span class="source">WhatsApp Business Platform sample message</span>
        <time>19:27</time>
      </footer>
      <svg class="tail" viewBox="0 0 35 34" aria-hidden="true">
        <path d="M11 0C11 18 7 26 0 33.6C9 34.2 16 32.3 21 29.5L24 0Z" />
      </svg>
    </article>

    <article class="outgoing">
      <p>Mensagem de teste</p>
      <time>20:21</time>
      <svg class="ticks" viewBox="0 0 30 20" aria-hidden="true">
        <path d="M1.5 12.2L6.8 17.5L19.5 1.6M12.7 15.6L15 17.5L27.7 1.6" />
      </svg>
      <svg class="tail" viewBox="0 0 35 34" aria-hidden="true">
        <path d="M24 0C24 18 28 26 35 33.6C26 34.2 19 32.3 14 29.5L11 0Z" />
      </svg>
    </article>
  </main>
</div>

<style>
  :global(body) {
    margin: 0;
    background: #161817;
  }
  .app {
    position: relative;
    display: flex;
    flex-direction: column;
    width: 2576px;
    height: 1160px;
    overflow: hidden;
    background: #161817;
    color: #dfe0df;
    font-family: Inter, 'Liberation Sans', sans-serif;
    -webkit-text-stroke: 0.35px currentColor;
  }
  h1, h2, h3, p {
    margin: 0;
  }
  .wallpaper {
    position: absolute;
    inset: 0;
    width: 2576px;
    height: 1160px;
    fill: none;
    stroke: #222424;
    stroke-width: 2.4;
    stroke-linecap: round;
    stroke-linejoin: round;
  }
  .wallpaper :is(path, circle, rect) {
    vector-effect: non-scaling-stroke;
  }
  .wallpaper text {
    font-family: Inter, sans-serif;
    font-weight: 400;
    fill: #222424;
    stroke: none;
    -webkit-text-stroke: 0;
  }
  /* the wide dark core leaves only the outline of the stroke visible */
  .wallpaper .outlined {
    font-weight: 700;
    fill: #161817;
    stroke: #222424;
    stroke-width: 3.4;
    paint-order: stroke;
    letter-spacing: 1px;
  }
  header {
    position: relative;
    box-sizing: border-box;
    display: flex;
    align-items: flex-start;
    flex: none;
    height: 97px;
    padding: 8px 31px 0 27px;
    background: #242625;
    border-bottom: 1px solid #484a49;
  }
  .avatar {
    display: block;
    flex: none;
    width: 72px;
    height: 72px;
  }
  .big {
    width: 112px;
    height: 112px;
  }
  .disc {
    fill: #12243f;
    stroke: #2a3b54;
    stroke-width: 1.5;
  }
  .person {
    fill: #6aa6f8;
  }
  .who {
    flex: 1;
    padding: 6px 0 0 15.5px;
  }
  h1 {
    font-size: 28px;
    line-height: 33px;
    font-weight: 600;
    letter-spacing: 0.45px;
  }
  .who p {
    font-size: 24px;
    line-height: 30px;
    letter-spacing: -0.08px;
    color: #a3a4a3;
  }
  .search {
    width: 36px;
    height: 36px;
    margin-top: 18px;
    fill: none;
    stroke: #b4b6b5;
    stroke-width: 2.6;
    stroke-linecap: round;
  }
  .search path {
    stroke-width: 3.6;
  }
  .corner {
    position: absolute;
    top: 0;
    right: 0;
    width: 8px;
    height: 14px;
  }
  .outside {
    fill: #16233c;
  }
  .edge {
    fill: none;
    stroke: #5b5d5c;
  }
  main {
    position: relative;
    display: flex;
    flex-direction: column;
    align-items: center;
    padding: 19px 10px 0 0;
  }
  .day {
    box-sizing: border-box;
    width: 180px;
    height: 60px;
    border-radius: 22px;
    background: #161817;
    color: #a09f9f;
    font-size: 26px;
    line-height: 62px;
    font-weight: 600;
    letter-spacing: 0.4px;
    text-align: center;
  }
  .notice {
    box-sizing: border-box;
    width: 1256px;
    height: 64px;
    margin: 22px 0 24px;
    border-radius: 24px;
    background: #161817;
    color: #6fc8b8;
    font-size: 25.5px;
    line-height: 62px;
    letter-spacing: -0.01px;
    text-align: center;
    white-space: nowrap;
  }
  .card {
    box-sizing: border-box;
    display: flex;
    flex-direction: column;
    align-items: center;
    width: 960px;
    height: 456px;
    padding: 40px 40px 0;
    border-radius: 24px;
    background: #161817;
  }
  h2 {
    margin: 29px 0 5px;
    font-size: 26px;
    line-height: 32px;
    font-weight: 600;
    letter-spacing: 0.54px;
  }
  .card p {
    font-size: 22px;
    line-height: 40px;
    letter-spacing: -0.02px;
    color: #8e8f8f;
  }
  .card .country {
    letter-spacing: 0.09px;
  }
  .actions {
    display: flex;
    gap: 16px;
    align-self: stretch;
    margin-top: 54px;
  }
  button {
    flex: 1;
    height: 56px;
    padding: 0;
    border: 0;
    border-radius: 28px;
    background: #2d2f2e;
    font-family: inherit;
    font-size: 25.5px;
    line-height: 57px;
  }
  .block {
    color: #ec5b64;
  }
  .profile {
    color: #fff;
    letter-spacing: 0.2px;
  }
  .today {
    margin: 22px 0;
    letter-spacing: 0;
  }
  .incoming {
    position: relative;
    align-self: flex-start;
    box-sizing: border-box;
    width: 1664px;
    height: 200px;
    margin-left: 19px;
    padding: 17px 21px 0 20px;
    border-radius: 24px;
    background: #242625;
  }
  h3 {
    margin-bottom: 26px;
    font-size: 28px;
    line-height: 34px;
    font-weight: 700;
    letter-spacing: 0;
  }
  .incoming p {
    padding-left: 0.5px;
    font-size: 25.6px;
    line-height: 32px;
    white-space: nowrap;
  }
  .second {
    letter-spacing: 0.04px;
  }
  .incoming footer {
    display: flex;
    justify-content: space-between;
    margin-top: 17px;
    font-size: 22px;
    line-height: 28px;
    color: #9fa09f;
  }
  .source {
    letter-spacing: 0.05px;
  }
  .incoming time {
    padding-top: 4px;
    letter-spacing: 0.4px;
  }
  .tail {
    position: absolute;
    bottom: 0;
    width: 35px;
    height: 34px;
  }
  .incoming .tail {
    left: -11px;
    fill: #242625;
  }
  .outgoing {
    position: relative;
    align-self: flex-end;
    box-sizing: border-box;
    display: flex;
    width: 398px;
    height: 60px;
    margin: 23px 20px 0 0;
    padding-left: 19.5px;
    border-radius: 26px;
    background: #264a39;
    line-height: 60px;
  }
  .outgoing p {
    font-size: 25.6px;
    color: #e0eae4;
  }
  .outgoing time {
    padding: 5px 0 0 26px;
    font-size: 22px;
    line-height: 60px;
    letter-spacing: 0.5px;
    color: #a4b7ad;
  }
  .ticks {
    width: 30px;
    height: 20px;
    margin: 25px 0 0 5.5px;
    fill: none;
    stroke: #a4b7ad;
    stroke-width: 2.8;
    stroke-linecap: round;
    stroke-linejoin: round;
  }
  .outgoing .tail {
    right: -11px;
    fill: #264a39;
  }
</style>
